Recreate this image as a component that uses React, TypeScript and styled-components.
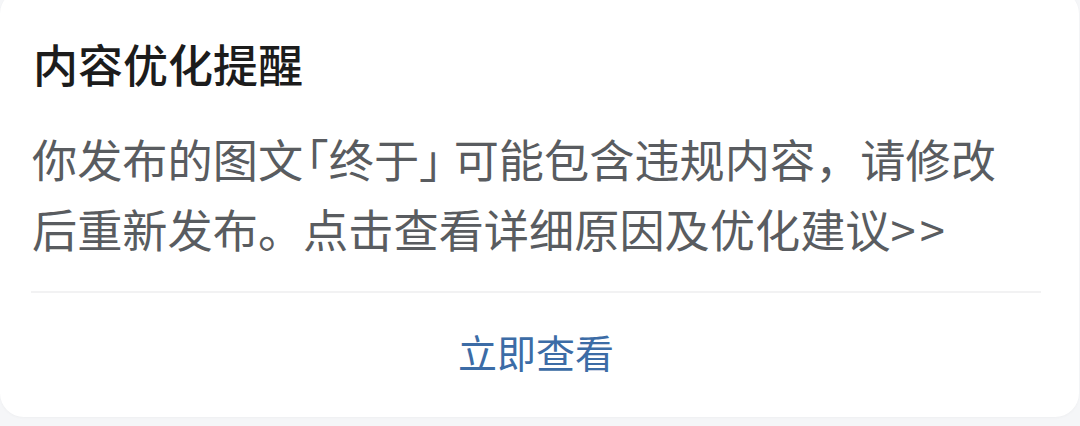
import styled, { createGlobalStyle } from "styled-components";

const GlobalStyle = createGlobalStyle`
  html, body {
    margin: 0;
    padding: 0;
    background: #f5f6f8;
    font-family: "Noto Sans CJK SC", "Noto Sans", sans-serif;
  }
`;

const Page = styled.div`
  width: 1080px;
  height: 426px;
  overflow: hidden;
  background: #f5f6f8;
`;

const Card = styled.div`
  width: 1079px;
  margin-top: -10px;
  padding: 44px 38px 0 31px;
  box-sizing: border-box;
  background: #fff;
  border-radius: 24px;
  box-shadow: 0 1px 3px rgba(0, 0, 0, 0.03);
`;

const Title = styled.h2`
  margin: 0 0 0 2px;
  font-size: 45px;
  line-height: 60px;
  font-weight: 500;
  color: #1c1c1c;
`;

const Message = styled.p`
  margin: 30px 0 0 1px;
  font-size: 45.2px;
  line-height: 70px;
  font-weight: 400;
  color: #595c60;
  white-space: nowrap;
`;

// corner brackets are set half width, as the phone font does
const Bracket = styled.span<{ $open?: boolean }>`
  font-feature-settings: "halt";
  margin: ${(p) => (p.$open ? "0 0 0 3px" : "0 12px 0 0")};
`;

const Arrows = styled.span`
  letter-spacing: 4px;
`;

const Divider = styled.div`
  margin-top: 27px;
  height: 2px;
  background: #f2f2f3;
`;

const ActionButton = styled.button`
  display: flex;
  align-items: center;
  justify-content: center;
  width: 100%;
  height: 124px;
  padding: 0 0 8px;
  border: none;
  background: transparent;
  font-family: inherit;
  font-size: 39px;
  color: #3c6ca6;
  cursor: pointer;
`;

export default function App() {
  return (
    <Page>
      <GlobalStyle />
      <Card>
        <Title>内容优化提醒</Title>
        <Message>
          你发布的图文<Bracket $open>「</Bracket>终于<Bracket>」</Bracket>可能包含违规内容，请修改
          <br />
          后重新发布。点击查看详细原因及优化建议<Arrows>&gt;&gt;</Arrows>
        </Message>
        <Divider />
        <ActionButton type="button">立即查看</ActionButton>
      </Card>
    </Page>
  );
}
